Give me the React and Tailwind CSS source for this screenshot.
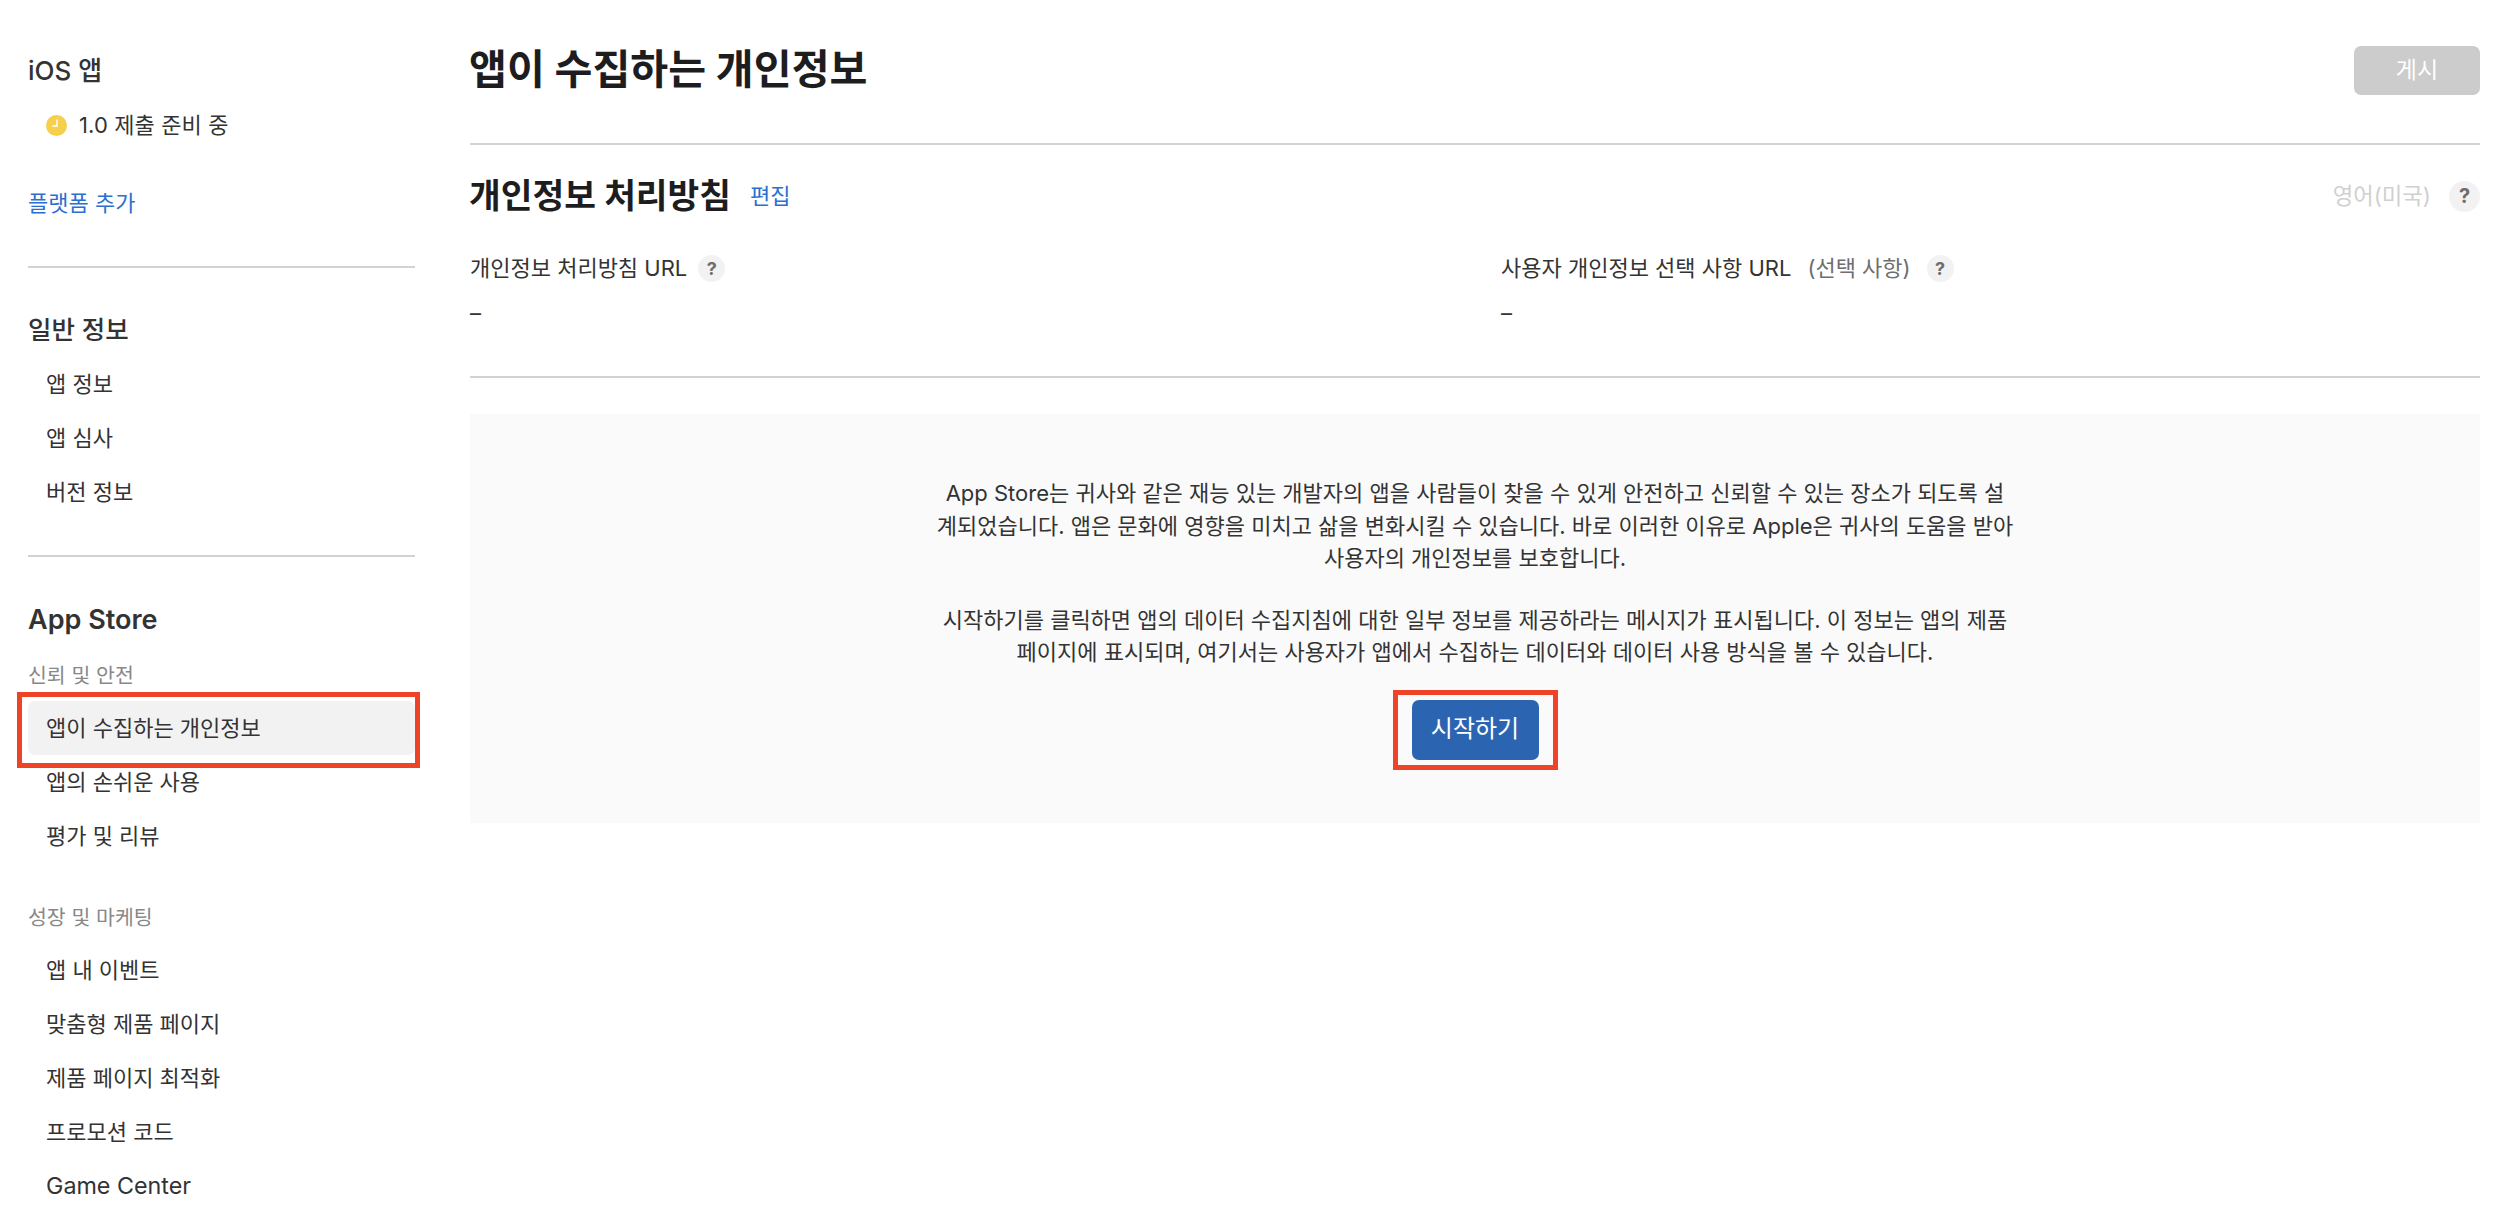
const FONT = "font-['Inter','Noto_Sans_CJK_KR',sans-serif]";

function Item({ children, selected, latin }) {
  return (
    <div className={`relative h-[54px] flex items-center pl-[18px] rounded-[7px] text-[#333] ${latin ? "text-[23.3px]" : "text-[22px]"} ${selected ? "bg-[#f2f2f2]" : ""}`}>
      {children}
      {selected && (
        <div className="absolute left-[-11px] right-[-5px] top-[-9px] bottom-[-13px] border-[5px] border-[#ee4327]" />
      )}
    </div>
  );
}

function Help({ large }) {
  return (
    <span className={`inline-flex items-center justify-center rounded-full bg-[#f2f2f2] text-[#6e6e6e] font-bold ${large ? "w-[31px] h-[31px] text-[20px]" : "w-[27px] h-[27px] text-[18px]"}`}>?</span>
  );
}

function Sidebar() {
  return (
    <aside className="w-[387px] shrink-0 ml-[28px] pt-[55px]">
      <div className="text-[26px] leading-[32px] font-medium text-[#333]">iOS 앱</div>
      <div className="mt-[11px] h-[54px] flex items-center pl-[18px] gap-[12px] text-[22px] text-[#333]">
        <svg width="21" height="21" viewBox="0 0 21 21">
          <circle cx="10.5" cy="10.5" r="10.5" fill="#f8cf4a" />
          <path d="M11 4.5V11H6.5" fill="none" stroke="#fff" strokeWidth="1.6" />
        </svg>
        <span className="tracking-[0.1px]">1.0 제출 준비 중</span>
      </div>
      <div className="mt-[35px] text-[22px] leading-[32px] text-[#2b6fd0]">플랫폼 추가</div>
      <div className="mt-[47px] h-[2px] bg-[#d2d2d2]" />
      <div className="mt-[46px] text-[25.5px] leading-[32px] font-medium text-[#333]">일반 정보</div>
      <div className="mt-[11px]">
        <Item>앱 정보</Item>
        <Item>앱 심사</Item>
        <Item>버전 정보</Item>
      </div>
      <div className="mt-[36px] h-[2px] bg-[#d2d2d2]" />
      <div className="mt-[47px] text-[27px] leading-[32px] font-semibold text-[#333]">App Store</div>
      <div className="mt-[26px] text-[20.5px] leading-[28px] text-[#888]">신뢰 및 안전</div>
      <div className="mt-[11px]">
        <Item selected>앱이 수집하는 개인정보</Item>
        <Item>앱의 손쉬운 사용</Item>
        <Item>평가 및 리뷰</Item>
      </div>
      <div className="mt-[41px] text-[20.5px] leading-[28px] text-[#888]">성장 및 마케팅</div>
      <div className="mt-[11px]">
        <Item>앱 내 이벤트</Item>
        <Item>맞춤형 제품 페이지</Item>
        <Item>제품 페이지 최적화</Item>
        <Item>프로모션 코드</Item>
        <Item latin>Game Center</Item>
      </div>
    </aside>
  );
}

function Main() {
  return (
    <main className="flex-1 ml-[55px] mr-[25px] pt-[44px]">
      <div className="flex justify-between items-start h-[99px]">
        <h1 className="-ml-px text-[41.2px] leading-[50px] font-bold text-[#1d1d1f]">앱이 수집하는 개인정보</h1>
        <button className="mt-[2px] w-[126px] h-[49px] rounded-[7px] bg-[#cccccc] text-white text-[23px]">게시</button>
      </div>
      <div className="h-[2px] bg-[#d2d2d2]" />
      <div className="mt-[31px] flex items-center h-[40px]">
        <h2 className="-ml-px text-[34.5px] leading-[40px] font-bold text-[#1d1d1f]">개인정보 처리방침</h2>
        <span className="ml-[19px] text-[22px] text-[#2b6fd0]">편집</span>
        <span className="ml-auto text-[22.3px] text-[#d0d0d0]">영어(미국)</span>
        <span className="ml-[18px]"><Help large /></span>
      </div>
      <div className="mt-[37px] grid grid-cols-2 gap-x-[52px]">
        <div>
          <div className="h-[30px] flex items-center gap-[11px] text-[22px] text-[#333]">
            <span>개인정보 처리방침 URL</span>
            <Help />
          </div>
          <div className="mt-[15px] h-[30px] flex items-center text-[22px] text-[#333]">–</div>
        </div>
        <div>
          <div className="h-[30px] flex items-center gap-[16px] text-[22px] text-[#333]">
            <span>사용자 개인정보 선택 사항 URL</span>
            <span className="text-[#6e6e6e] text-[22px]">(선택 사항)</span>
            <Help />
          </div>
          <div className="mt-[15px] h-[30px] flex items-center text-[22px] text-[#333]">–</div>
        </div>
      </div>
      <div className="mt-[48px] h-[2px] bg-[#d2d2d2]" />
      <section className="mt-[36px] bg-[#fafafa] pt-[63px] pb-[63px] flex flex-col items-center text-center text-[22px] leading-[32.5px] text-[#333]">
        <p>
          App Store는 귀사와 같은 재능 있는 개발자의 앱을 사람들이 찾을 수 있게 안전하고 신뢰할 수 있는 장소가 되도록 설<br />
          계되었습니다. 앱은 문화에 영향을 미치고 삶을 변화시킬 수 있습니다. 바로 이러한 이유로 Apple은 귀사의 도움을 받아<br />
          사용자의 개인정보를 보호합니다.
        </p>
        <p className="mt-[29px]">
          시작하기를 클릭하면 앱의 데이터 수집지침에 대한 일부 정보를 제공하라는 메시지가 표시됩니다. 이 정보는 앱의 제품<br />
          페이지에 표시되며, 여기서는 사용자가 앱에서 수집하는 데이터와 데이터 사용 방식을 볼 수 있습니다.
        </p>
        <div className="relative mt-[31px]">
          <button className="block w-[127px] h-[60px] rounded-[7px] bg-[#2b65b2] text-white text-[24px]">시작하기</button>
          <div className="absolute left-[-19px] right-[-19px] top-[-10px] bottom-[-10px] border-[5px] border-[#ee4327]" />
        </div>
      </section>
    </main>
  );
}

export default function App() {
  return (
    <div className={`${FONT} flex w-[2505px] h-[1222px] overflow-hidden bg-white`}>
      <Sidebar />
      <Main />
    </div>
  );
}
